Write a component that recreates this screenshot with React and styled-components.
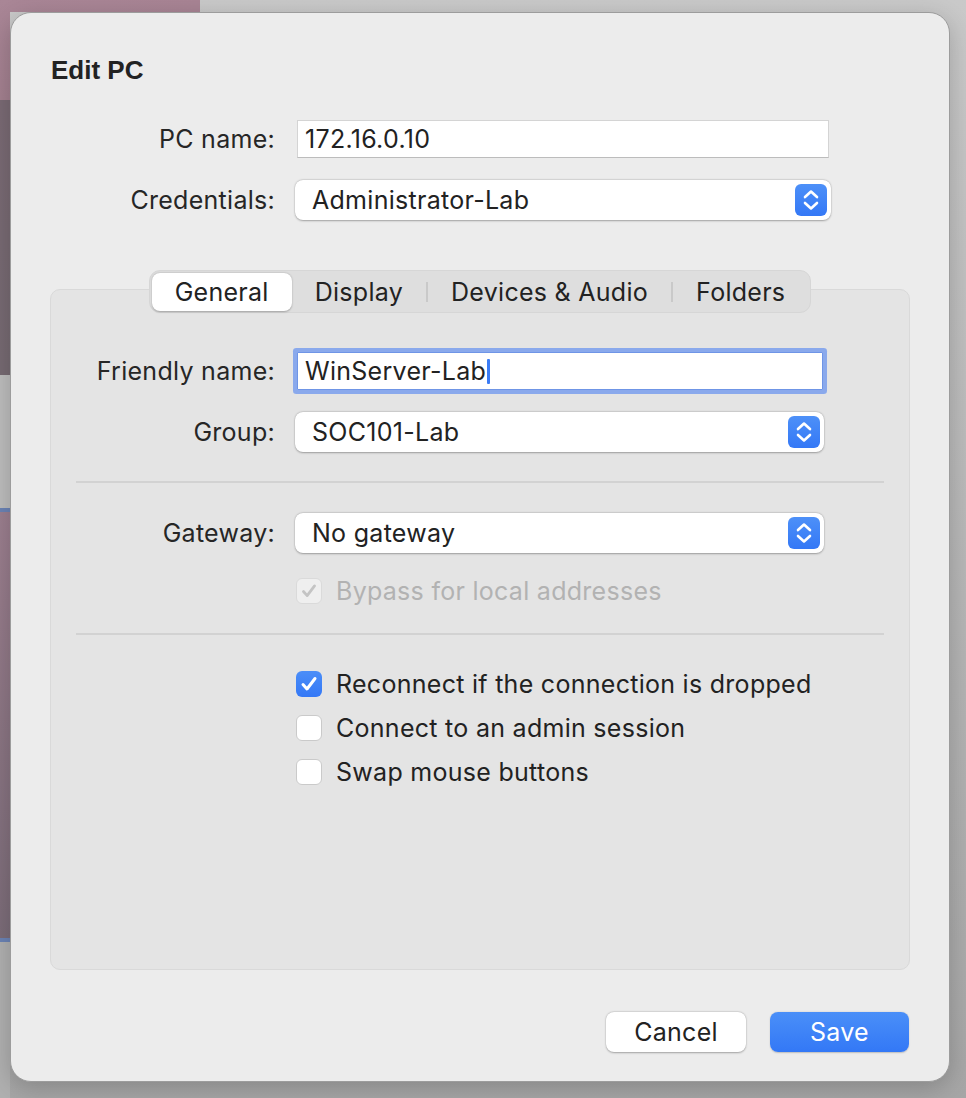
import styled, { createGlobalStyle } from "styled-components";

const GlobalStyle = createGlobalStyle`
  html, body {
    margin: 0;
    padding: 0;
  }
  body {
    width: 966px;
    height: 1098px;
    overflow: hidden;
    font-family: Inter, "Liberation Sans", sans-serif;
    letter-spacing: 0.28px;
    color: #262626;
    background:
      linear-gradient(
          to bottom,
          #a98696 0,
          #a3808f 100px,
          #7a6a74 100px,
          #766a72 375px,
          #bdbdbd 375px,
          #bdbdbd 508px,
          #6b83b5 508px,
          #6b83b5 512px,
          #9c7f8f 512px,
          #7b6c78 938px,
          #6b83b5 938px,
          #6b83b5 942px,
          #b0b0b0 942px
        )
        left top / 10px 100% no-repeat,
      linear-gradient(to right, #a98696 0, #a88494 200px, transparent 200px)
        left top / 100% 12px no-repeat,
      linear-gradient(to bottom, #c9c9c9, #a6a6a6);
  }
`;

const Dialog = styled.div`
  box-sizing: border-box;
  margin: 12px 0 0 10px;
  width: 940px;
  height: 1070px;
  display: flex;
  flex-direction: column;
  background: #ececec;
  border: 1px solid #9c9c9c;
  border-radius: 21px;
  box-shadow: 0 6px 24px rgba(0, 0, 0, 0.2);
`;

const Title = styled.h1`
  margin: 42px 0 0 40px;
  font-size: 26px;
  line-height: 30px;
  font-weight: 700;
  letter-spacing: 0;
  font-family: "Liberation Sans", Inter, sans-serif;
  color: #222;
`;

const Form = styled.div`
  display: flex;
  flex-direction: column;
  gap: ${(p) => p.gap || 22}px;
  margin-top: ${(p) => p.top || 0}px;
`;

const Row = styled.div`
  display: grid;
  grid-template-columns: ${(p) => p.labelWidth}px auto;
  column-gap: 20px;
  align-items: center;
  margin-top: ${(p) => p.top || 0}px;
`;

const Label = styled.span`
  text-align: right;
  font-size: 25px;
  line-height: 30px;
  white-space: nowrap;
`;

const TextField = styled.div`
  box-sizing: border-box;
  margin-left: 2px;
  width: ${(p) => p.width}px;
  height: 38px;
  display: flex;
  align-items: center;
  padding-left: 7px;
  background: #fff;
  border: 1px solid #d4d4d4;
  border-bottom-color: #bcbcbc;
  font-size: 25px;
  color: #222;
  ${(p) =>
    p.focused &&
    `
    border-color: #6f95e6;
    box-shadow: 0 0 0 4px #8aa9ec;
    border-radius: 1px;
  `}
`;

const Caret = styled.span`
  display: inline-block;
  width: 3px;
  height: 25px;
  margin-left: 1px;
  border-radius: 1px;
  background: #3b7cf5;
`;

const Popup = styled.div`
  box-sizing: border-box;
  width: ${(p) => p.width}px;
  height: 40px;
  display: flex;
  align-items: center;
  justify-content: space-between;
  padding: 0 4px 0 17px;
  background: #fff;
  border-radius: 8px;
  box-shadow: 0 0.5px 2px rgba(0, 0, 0, 0.3), 0 0 0 0.5px rgba(0, 0, 0, 0.06);
  font-size: 25px;
  color: #222;
`;

const StepperBox = styled.span`
  width: 32px;
  height: 32px;
  border-radius: 6px;
  background: linear-gradient(to bottom, #4d90f8, #3478f6);
  display: flex;
`;

const Stepper = () => (
  <StepperBox>
    <svg width="32" height="32" viewBox="0 0 32 32" fill="none">
      <path
        d="M10 13 L16 7.5 L22 13 M10 19 L16 24.5 L22 19"
        stroke="#fff"
        strokeWidth="2.6"
        strokeLinecap="round"
        strokeLinejoin="round"
      />
    </svg>
  </StepperBox>
);

const Panel = styled.div`
  box-sizing: border-box;
  margin: 69px 0 0 39px;
  width: 860px;
  height: 681px;
  display: flex;
  flex-direction: column;
  background: #e4e4e4;
  border: 1px solid #d9d9d9;
  border-radius: 10px;
`;

const Tabs = styled.div`
  box-sizing: border-box;
  align-self: center;
  margin-top: -20px;
  height: 43px;
  padding: 2px;
  display: flex;
  align-items: center;
  background: #dedede;
  border: 1px solid #d6d6d6;
  border-radius: 11px;
`;

const Tab = styled.div`
  box-sizing: border-box;
  height: 38px;
  display: flex;
  align-items: center;
  padding: 0 23px;
  font-size: 25px;
  color: #222;
  border-radius: 8px;
  ${(p) =>
    p.active &&
    `
    background: #fff;
    box-shadow: 0 0.5px 2px rgba(0, 0, 0, 0.28);
  `}
`;

const TabDivider = styled.span`
  width: 2px;
  height: 20px;
  background: ${(p) => (p.hidden ? "transparent" : "#c9c9c9")};
`;

const Separator = styled.div`
  height: 2px;
  margin: ${(p) => p.top}px 25px 0;
  background: #d2d2d2;
`;

const CheckRow = styled.label`
  display: flex;
  align-items: center;
  gap: 14px;
  height: 30px;
  font-size: 25px;
  color: ${(p) => (p.disabled ? "#b2b2b2" : "#222")};
`;

const Box = styled.span`
  box-sizing: border-box;
  width: 26px;
  height: 26px;
  border-radius: 6px;
  display: flex;
  align-items: center;
  justify-content: center;
  background: ${(p) =>
    p.checked && !p.disabled
      ? "linear-gradient(to bottom, #4b8ef8, #3478f6)"
      : p.disabled
      ? "#efefef"
      : "#fff"};
  border: ${(p) =>
    p.checked && !p.disabled
      ? "none"
      : p.disabled
      ? "1px solid #dadada"
      : "1px solid #cacaca"};
`;

const Check = ({ checked, disabled, children }) => (
  <CheckRow disabled={disabled}>
    <Box checked={checked} disabled={disabled}>
      {checked && (
        <svg width="26" height="26" viewBox="0 0 26 26" fill="none">
          <path
            d="M7 13.5 L11 18 L19 7.5"
            stroke={disabled ? "#c4c4c4" : "#fff"}
            strokeWidth="3"
            strokeLinecap="round"
            strokeLinejoin="round"
          />
        </svg>
      )}
    </Box>
    {children}
  </CheckRow>
);

const CheckList = styled.div`
  display: flex;
  flex-direction: column;
  gap: 14px;
  margin: ${(p) => p.top}px 0 0 245px;
`;

const Footer = styled.div`
  display: flex;
  justify-content: flex-end;
  gap: 24px;
  margin: 42px 40px 0 0;
`;

const Button = styled.button`
  box-sizing: border-box;
  width: ${(p) => (p.primary ? 139 : 140)}px;
  height: 40px;
  border: none;
  border-radius: 8px;
  font-family: inherit;
  letter-spacing: inherit;
  font-size: 25px;
  color: ${(p) => (p.primary ? "#fff" : "#222")};
  background: ${(p) =>
    p.primary ? "linear-gradient(to bottom, #4a8ff8, #3378f6)" : "#fff"};
  box-shadow: ${(p) =>
    p.primary
      ? "0 0.5px 1.5px rgba(0, 0, 0, 0.2)"
      : "0 0.5px 2px rgba(0, 0, 0, 0.3), 0 0 0 0.5px rgba(0, 0, 0, 0.05)"};
`;

const tabs = ["General", "Display", "Devices & Audio", "Folders"];

export default function App() {
  const active = 0;
  return (
    <>
      <GlobalStyle />
      <Dialog>
        <Title>Edit PC</Title>
        <Form top={35}>
          <Row labelWidth={264}>
            <Label>PC name:</Label>
            <TextField width={532}>172.16.0.10</TextField>
          </Row>
          <Row labelWidth={264}>
            <Label>Credentials:</Label>
            <Popup width={536}>
              Administrator-Lab
              <Stepper />
            </Popup>
          </Row>
        </Form>

        <Panel>
          <Tabs>
            {tabs.map((name, i) => (
              <span key={name} style={{ display: "contents" }}>
                {i > 0 && <TabDivider hidden={i === active || i - 1 === active} />}
                <Tab active={i === active}>{name}</Tab>
              </span>
            ))}
          </Tabs>

          <Form top={39}>
            <Row labelWidth={224}>
              <Label>Friendly name:</Label>
              <TextField width={526} focused>
                WinServer-Lab
                <Caret />
              </TextField>
            </Row>
            <Row labelWidth={224}>
              <Label>Group:</Label>
              <Popup width={529}>
                SOC101-Lab
                <Stepper />
              </Popup>
            </Row>
          </Form>

          <Separator top={29} />

          <Row labelWidth={224} top={30}>
            <Label>Gateway:</Label>
            <Popup width={529}>
              No gateway
              <Stepper />
            </Popup>
          </Row>
          <CheckList top={23}>
            <Check checked disabled>
              Bypass for local addresses
            </Check>
          </CheckList>

          <Separator top={27} />

          <CheckList top={34}>
            <Check checked>Reconnect if the connection is dropped</Check>
            <Check>Connect to an admin session</Check>
            <Check>Swap mouse buttons</Check>
          </CheckList>
        </Panel>

        <Footer>
          <Button>Cancel</Button>
          <Button primary>Save</Button>
        </Footer>
      </Dialog>
    </>
  );
}
